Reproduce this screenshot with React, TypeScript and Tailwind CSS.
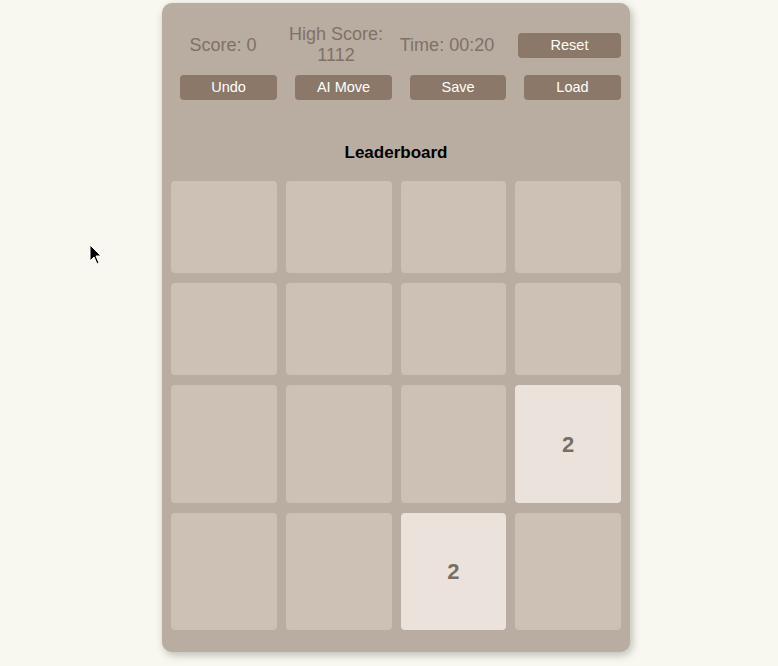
const ROWS: number[][] = [
  [0, 0, 0, 0],
  [0, 0, 0, 0],
  [0, 0, 0, 2],
  [0, 0, 2, 0],
];

const ROW_HEIGHTS = ['h-[92px]', 'h-[92px]', 'h-[118px]', 'h-[117px]'];

function Btn({ label, w }: { label: string; w: string }) {
  return (
    <button className={`${w} h-[25px] rounded-[4px] bg-[#8b7868] text-[14.5px] leading-none text-white`}>
      {label}
    </button>
  );
}

export default function App() {
  return (
    <div className="relative min-h-screen w-full bg-[#f8f8f0] pt-[3px] font-['Liberation_Sans',Arial,sans-serif]">
      {/* Game panel */}
      <div className="ml-[162px] w-[468px] h-[649px] rounded-[10px] bg-[#b9aca1] px-[9px] pt-[21px] shadow-[2px_3px_8px_rgba(0,0,0,0.25)]">
        {/* Stats row */}
        <div className="flex h-[42px] items-center text-[18px] leading-[21px] text-[#7f7168]">
          <div className="w-[104px] text-center">Score: 0</div>
          <div className="w-[122px] text-center">
            High Score:
            <br />
            1112
          </div>
          <div className="w-[100px] text-center">Time: 00:20</div>
          <div className="ml-[21px]">
            <Btn label="Reset" w="w-[103px]" />
          </div>
        </div>

        {/* Action buttons */}
        <div className="mt-[9px] flex justify-between pl-[9px]">
          <Btn label="Undo" w="w-[97px]" />
          <Btn label="AI Move" w="w-[97px]" />
          <Btn label="Save" w="w-[96px]" />
          <Btn label="Load" w="w-[97px]" />
        </div>

        <h3 className="mt-[43px] text-center text-[17px] font-bold leading-[19px] text-black">Leaderboard</h3>

        {/* Board */}
        <div className="mt-[19px] grid grid-cols-4 gap-x-[9px] gap-y-[10px]">
          {ROWS.map((row, r) =>
            row.map((v, c) => (
              <div
                key={`${r}-${c}`}
                className={`${ROW_HEIGHTS[r]} flex items-center justify-center rounded-[4px] ${
                  v ? 'bg-[#ece2dc]' : 'bg-[#cdc1b5]'
                } text-[22px] font-bold text-[#776e65]`}
              >
                {v ? v : ''}
              </div>
            ))
          )}
        </div>
      </div>

      {/* Mouse pointer */}
      <svg className="absolute left-[89px] top-[244px]" width="14" height="22" viewBox="0 0 14 22">
        <path d="M1 1 L1 17 L5 13 L8 20 L10 19 L7 12 L12 12 Z" fill="#000" stroke="#fff" strokeWidth="1" />
      </svg>
    </div>
  );
}
